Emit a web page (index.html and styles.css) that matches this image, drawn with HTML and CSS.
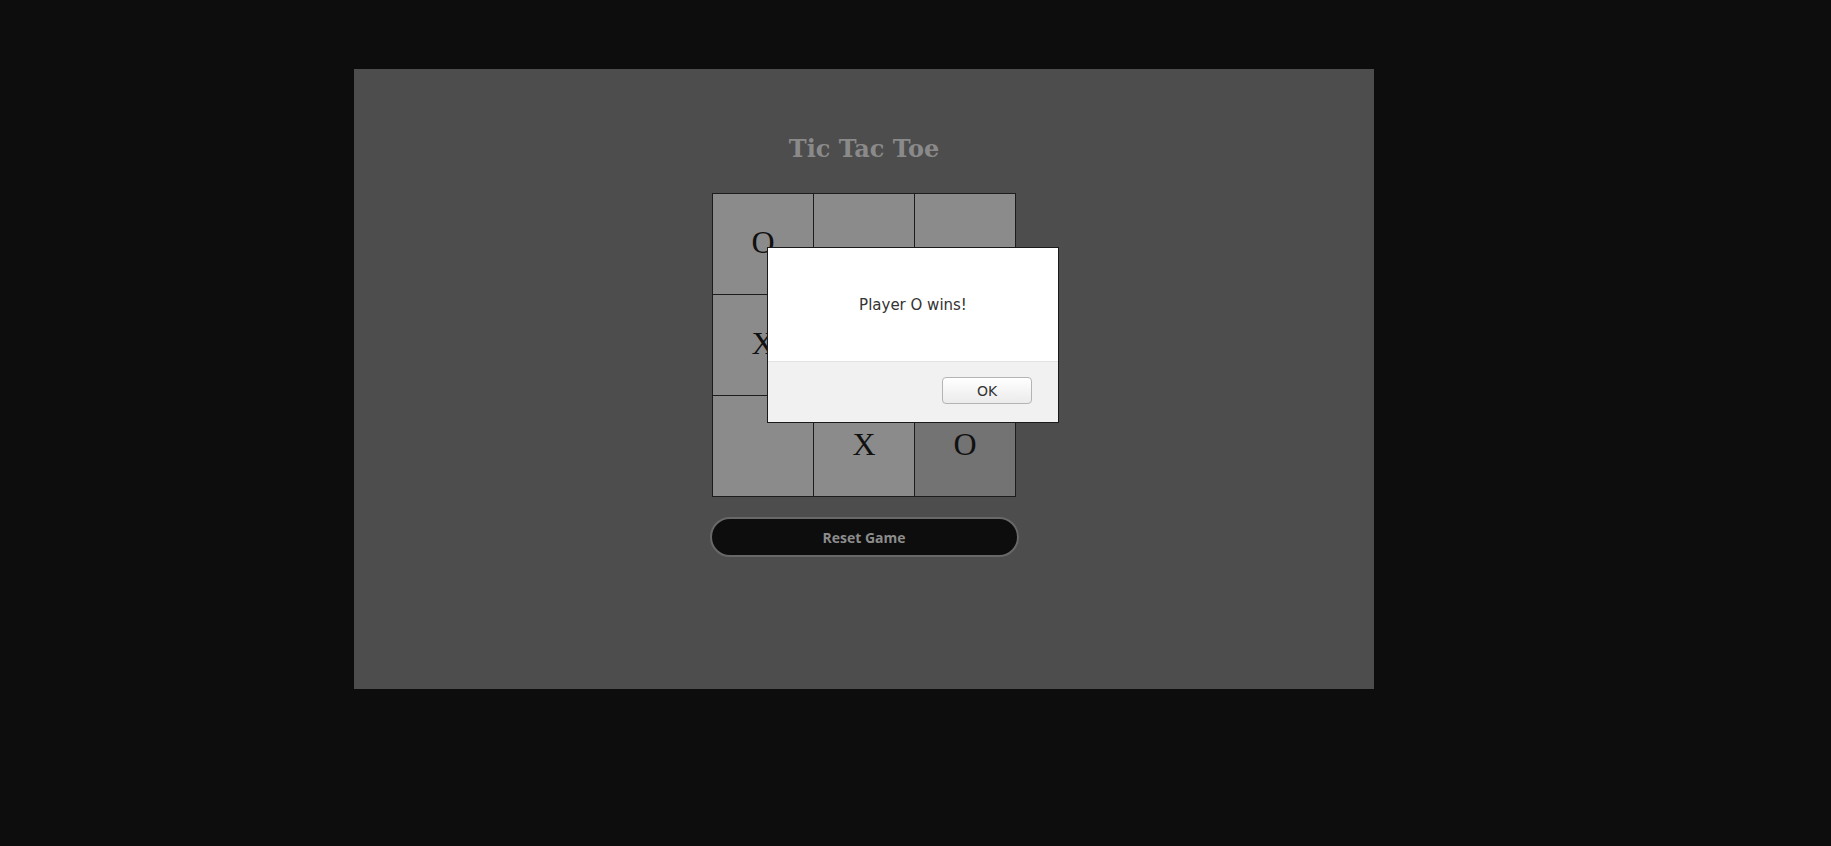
FILE: index.html
```html
<!DOCTYPE html>
<html>
<head>
<meta charset="utf-8">
<link rel="stylesheet" href="styles.css">
</head>
<body>
<div class="panel">
  <h1 class="title">Tic Tac Toe</h1>
  <div class="board">
    <div class="cell">O</div>
    <div class="cell"></div>
    <div class="cell"></div>
    <div class="cell">X</div>
    <div class="cell"></div>
    <div class="cell"></div>
    <div class="cell"></div>
    <div class="cell">X</div>
    <div class="cell cell-hover">O</div>
  </div>
  <button class="reset">Reset Game</button>
  <div class="dialog">
    <div class="dialog-body">Player O wins!</div>
    <div class="dialog-footer"><button class="ok">OK</button></div>
  </div>
</div>
</body>
</html>
```

FILE: styles.css
```css
html, body {
  margin: 0;
  background: #0d0d0d;
}
body {
  padding: 69px 0 0 354px;
}
.panel {
  position: relative;
  width: 1020px;
  height: 620px;
  background: #4d4d4d;
  display: flex;
  flex-direction: column;
  align-items: center;
  box-sizing: border-box;
  padding-top: 66px;
}
.title {
  margin: 0;
  font-family: "DejaVu Serif", serif;
  font-weight: bold;
  font-size: 24px;
  line-height: 28px;
  color: #8a8a8a;
}
.board {
  margin-top: 30px;
  display: grid;
  grid-template-columns: repeat(3, 100px);
  grid-template-rows: repeat(3, 100px);
  gap: 1px;
  background: #1c1c1c;
  border: 1px solid #1c1c1c;
}
.cell {
  background: #8b8b8b;
  display: flex;
  align-items: center;
  justify-content: center;
  padding-bottom: 3px;
  font-family: "Liberation Serif", serif;
  font-size: 32px;
  color: #111;
}
.cell-hover {
  background: #737373;
}
.reset {
  margin-top: 20px;
  width: 309px;
  height: 40px;
  border-radius: 20px;
  background: #0d0d0d;
  border: 2px solid #686868;
  color: #8c8c8c;
  font-family: "Open Sans", sans-serif;
  font-weight: bold;
  font-size: 14px;
}
.dialog {
  position: absolute;
  left: 413px;
  top: 178px;
  width: 290px;
  border: 1px solid #1a1a1a;
  background: #fff;
  font-family: "DejaVu Sans", sans-serif;
  font-size: 15px;
  color: #333;
}
.dialog-body {
  height: 113px;
  display: flex;
  align-items: center;
  justify-content: center;
}
.dialog-footer {
  height: 60px;
  background: #f1f1f1;
  border-top: 1px solid #e2e2e2;
  display: flex;
  justify-content: flex-end;
  align-items: center;
  padding-right: 26px;
}
.ok {
  width: 90px;
  height: 27px;
  margin-top: -3px;
  border: 1px solid #b4b4b4;
  border-radius: 4px;
  background: linear-gradient(#ffffff, #ebebeb);
  font-family: "DejaVu Sans", sans-serif;
  font-size: 14px;
  color: #333;
}
```
